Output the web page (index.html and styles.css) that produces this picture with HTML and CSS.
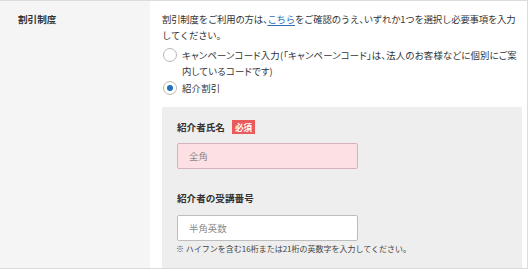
FILE: index.html
```html
<!DOCTYPE html>
<html lang="ja">
<head>
<meta charset="utf-8">
<link rel="stylesheet" href="styles.css">
</head>
<body>
<div class="row">
  <div class="head">割引制度</div>
  <div class="cell">
    <p class="intro">割引制度をご利用の方は、<a class="link" href="#">こちら</a>をご確認のうえ、いずれか1つを選択し必要事項を入力してください。</p>
    <label class="opt">
      <span class="radio"></span>
      <span class="opt-text">キャンペーンコード入力(「キャンペーンコード」は、法人のお客様などに個別にご案内しているコードです)</span>
    </label>
    <label class="opt opt-2">
      <span class="radio checked"></span>
      <span class="opt-text">紹介割引</span>
    </label>
    <div class="box">
      <div class="field-label">紹介者氏名<span class="badge">必須</span></div>
      <input class="input input-req" type="text" placeholder="全角">
      <div class="field-label field-label-2">紹介者の受講番号</div>
      <input class="input" type="text" placeholder="半角英数">
      <p class="note">※ ハイフンを含む16桁または21桁の英数字を入力してください。</p>
    </div>
  </div>
</div>
</body>
</html>
```

FILE: styles.css
```css
html, body {
  margin: 0;
  padding: 0;
  background: #fff;
}
body {
  font-family: "Noto Sans CJK JP", "Noto Sans", sans-serif;
  font-size: 9.4px;
  color: #333;
}
.row {
  display: flex;
  width: 527px;
  height: 267px;
  border-top: 1px solid #dcdcdc;
  border-bottom: 1px solid #dcdcdc;
  border-right: 1px solid #dcdcdc;
}
.head {
  width: 132px;
  flex: none;
  background: #f5f5f5;
  padding: 10px 0 0 18px;
  font-weight: bold;
  font-size: 9.6px;
  line-height: 16px;
  color: #333;
}
.cell {
  flex: 1;
  padding: 10px 5px 0 12px;
  display: flex;
  flex-direction: column;
}
.intro {
  margin: 0;
  line-height: 16px;
  font-feature-settings: "halt";
  letter-spacing: -0.2px;
}
.link {
  color: #2a6db5;
  text-decoration: underline;
  text-underline-offset: 2px;
}
.opt {
  display: flex;
  align-items: flex-start;
  margin-top: 4px;
  line-height: 16px;
}
.opt-2 {
  margin-top: 1px;
}
.radio {
  flex: none;
  width: 12px;
  height: 12px;
  border: 1px solid #b8b8b8;
  border-radius: 50%;
  background: #fff;
  margin: 1px 5px 0 1px;
  display: flex;
  align-items: center;
  justify-content: center;
}
.radio.checked::after {
  content: "";
  width: 6px;
  height: 6px;
  border-radius: 50%;
  background: #1f6fc0;
}
.opt-text {
  flex: 1;
  font-feature-settings: "palt";
  letter-spacing: 0.2px;
}
.box {
  margin-top: 11px;
  flex: 1;
  background: #eeeeee;
  padding: 12px 15px 0 15px;
}
.field-label {
  font-weight: bold;
  font-size: 9.6px;
  line-height: 16px;
  display: flex;
  align-items: center;
}
.field-label-2 {
  margin-top: 21px;
}
.badge {
  margin-left: 7px;
  background: #eb5a5a;
  color: #fff;
  font-size: 8.6px;
  font-weight: bold;
  line-height: 14px;
  padding: 0 3px;
}
.input {
  display: block;
  box-sizing: border-box;
  width: 181px;
  height: 26px;
  margin: 8px 0 0 0;
  padding: 0 11px;
  border: 1px solid #bdbdbd;
  border-radius: 2px;
  background: #fff;
  font-family: "Noto Sans CJK JP", "Noto Sans", sans-serif;
  font-size: 9.4px;
  color: #333;
}
.input-req {
  background: #fde0e4;
  border-color: #d5b3b8;
}
.input::placeholder {
  color: #8a8a8a;
}
.field-label-2 + .input {
  margin-top: 9px;
}
.note {
  margin: 2px 0 0 -1px;
  font-size: 8px;
  line-height: 12px;
  color: #444;
}
```
